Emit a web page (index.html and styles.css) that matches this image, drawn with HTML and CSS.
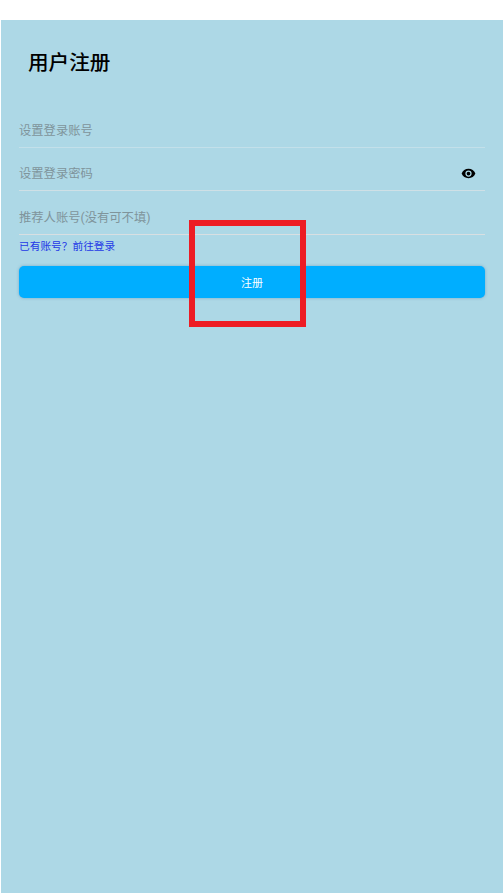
FILE: index.html
```html
<!DOCTYPE html>
<html lang="zh">

<head>
    <meta charset="UTF-8">
    <meta name="viewport" content="width=device-width, initial-scale=1.0">
    <title>用户注册</title>
    <link rel="stylesheet" href="styles.css">
</head>

<body>
    <div class="screen">
        <h1 class="title">用户注册</h1>
        <form class="form">
            <div class="field">
                <span class="hint">设置登录账号</span>
            </div>
            <div class="field">
                <span class="hint">设置登录密码</span>
                <svg class="eye" viewBox="0 0 24 24" width="15" height="15">
                    <path d="M12 4.500C7 4.500 2.700 7.600 1 12c1.700 4.400 6 7.500 11 7.500s9.300-3.100 11-7.500c-1.700-4.400-6-7.500-11-7.500zM12 17a5 5 0 1 1 0-10 5 5 0 0 1 0 10zm0-8a3 3 0 1 0 0 6 3 3 0 0 0 0-6z"/>
                </svg>
            </div>
            <div class="field field-ref">
                <span class="hint">推荐人账号(没有可不填)</span>
            </div>
            <a class="login-link">已有账号？前往登录</a>
            <div class="btn">注册</div>
        </form>
        <div class="marker"></div>
    </div>
</body>

</html>
```

FILE: styles.css
```css
* {
    margin: 0;
    padding: 0;
    box-sizing: border-box;
}

html,
body {
    height: 100%;
    background-color: #fff;
}

body {
    padding: 20px 0 1px 1px;
    font-family: Roboto, "Noto Sans CJK SC", sans-serif;
}

.screen {
    position: relative;
    height: 100%;
    background-color: #add8e6;
}

.title {
    padding: 28px 0 0 27px;
    height: 85px;
    font-size: 20.6px;
    line-height: 30px;
    font-weight: 500;
    color: #000;
}

.form {
    display: flex;
    flex-direction: column;
    padding: 0 18px;
}

.field {
    display: flex;
    align-items: center;
    justify-content: space-between;
    height: 43px;
    padding-top: 8px;
    border-bottom: 1px solid #cfe0e6;
}

.field-ref {
    height: 44px;
    border-bottom-color: #d8dfe2;
}

.field:first-child {
    border-bottom-color: #c3e0ea;
}

.hint {
    font-size: 12.3px;
    color: #7f949b;
}

.eye {
    margin-right: 9px;
    fill: #000;
}

.login-link {
    margin-top: 4px;
    font-size: 10.7px;
    line-height: 16px;
    color: #2438e6;
}

.btn {
    display: flex;
    align-items: center;
    justify-content: center;
    height: 32px;
    margin-top: 11px;
    padding-bottom: 1px;
    border-radius: 5px;
    background-color: #00aeff;
    color: #fff;
    font-size: 11px;
    box-shadow: 0 0 3px rgba(60, 120, 170, 0.5);
}

/* annotation box drawn over the button */
.marker {
    position: absolute;
    left: 188px;
    top: 200px;
    width: 117px;
    height: 107px;
    border: 6px solid #ed1c24;
}
```
